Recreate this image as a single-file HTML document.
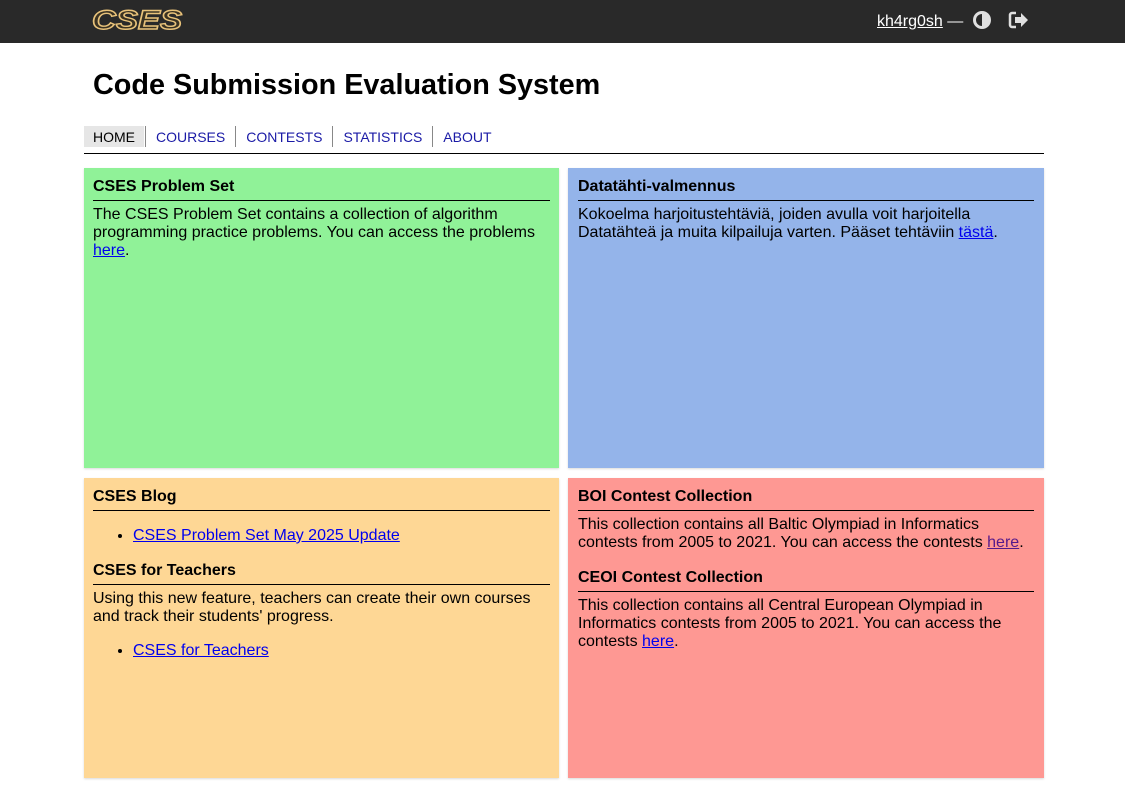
<!DOCTYPE html>
<html><head><meta charset="utf-8"><style>
body{margin:0;font-family:"Liberation Sans",sans-serif;background:#fff;color:#000;}
.top{height:43px;background:#292929;position:relative;}
.logo{position:absolute;left:92px;top:7px;}
.user{position:absolute;left:877px;top:10px;color:#fff;font-size:16px;}
.user a{color:#fff;}
h1{position:absolute;left:93px;top:69px;margin:0;font-size:28.8px;font-weight:bold;}
.nav{position:absolute;left:84px;top:126px;width:960px;height:27px;border-bottom:1px solid #000;font-size:14px;}
.nav span{display:inline-block;height:20px;line-height:20px;padding:1px 10px 0;border-left:1px solid #888;color:#1a1aa6;float:left;}
.nav span.h{background:#e6e6e6;color:#000;border-left:none;padding:1px 9px 0;margin-right:1px;}
.box{position:absolute;width:457px;height:282px;padding:9px;box-shadow:0 1px 2px rgba(0,0,0,.15);font-size:16px;line-height:18px;}
.box h3{margin:0 0 5px;font-size:16px;line-height:19px;padding-bottom:4px;border-bottom:1px solid #000;}
.box p{margin:0;line-height:18px;}
a{color:#00e;}
ul{margin:16px 0 16px;padding-left:40px;}
</style></head><body>
<div class="top">
<svg class="logo" width="92" height="26" viewBox="0 0 92 26"><text x="0" y="22" font-family="Liberation Sans" font-weight="bold" font-style="italic" font-size="27" fill="#3a3222" stroke="#e8c27a" stroke-width="1.4" textLength="90" lengthAdjust="spacingAndGlyphs">CSES</text></svg>
<div class="user"><a href="#">kh4rg0sh</a> —
<svg width="20" height="20" viewBox="0 0 20 20" style="vertical-align:-4px;margin-left:4px"><circle cx="10" cy="10" r="9" fill="#e0e0e0"/><path d="M10 4a6 6 0 0 0 0 12z" fill="#292929"/></svg>
<svg width="22" height="18" viewBox="0 0 22 18" style="vertical-align:-3px;margin-left:12px"><path d="M8 2H4a2 2 0 0 0-2 2v10a2 2 0 0 0 2 2h4" fill="none" stroke="#e0e0e0" stroke-width="2.5"/><path d="M7 6h6V2l7 7-7 7v-4H7z" fill="#e0e0e0"/></svg></div>
</div>
<h1>Code Submission Evaluation System</h1>
<div class="nav"><span class="h">HOME</span><span>COURSES</span><span>CONTESTS</span><span>STATISTICS</span><span>ABOUT</span></div>
<div class="box" style="left:84px;top:168px;background:#90f298"><h3>CSES Problem Set</h3><p>The CSES Problem Set contains a collection of algorithm programming practice problems. You can access the problems <a href="#">here</a>.</p></div>
<div class="box" style="left:568px;top:168px;width:456px;padding-left:10px;padding-right:10px;background:#94b4ea"><h3>Datatähti-valmennus</h3><p>Kokoelma harjoitustehtäviä, joiden avulla voit harjoitella Datatähteä ja muita kilpailuja varten. Pääset tehtäviin <a href="#">tästä</a>.</p></div>
<div class="box" style="left:84px;top:478px;background:#fed795"><h3>CSES Blog</h3><ul><li><a href="#">CSES Problem Set May 2025 Update</a></li></ul><h3>CSES for Teachers</h3><p>Using this new feature, teachers can create their own courses and track their students' progress.</p><ul><li><a href="#">CSES for Teachers</a></li></ul></div>
<div class="box" style="left:568px;top:478px;width:456px;padding-left:10px;padding-right:10px;background:#fe9893"><h3>BOI Contest Collection</h3><p>This collection contains all Baltic Olympiad in Informatics contests from 2005 to 2021. You can access the contests <a href="#" style="color:#551a8b">here</a>.</p><h3 style="margin-top:16px">CEOI Contest Collection</h3><p>This collection contains all Central European Olympiad in Informatics contests from 2005 to 2021. You can access the contests <a href="#">here</a>.</p></div>
</body></html>
